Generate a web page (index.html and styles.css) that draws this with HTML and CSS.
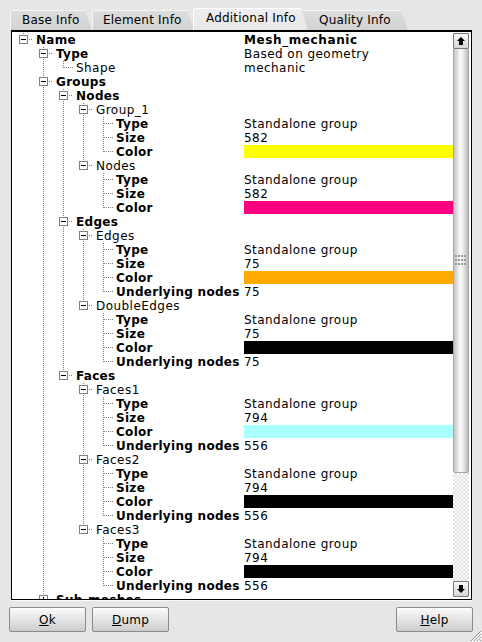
FILE: index.html
```html
<!DOCTYPE html>
<html lang="en">
<head>
    <meta charset="UTF-8">
    <meta name="viewport" content="width=device-width, initial-scale=1.0">
    <title>Mesh Information</title>
    <link rel="stylesheet" href="styles.css">
</head>
<body>
    <div class="tab-bar">
        <div class="tab tab-base">Base Info</div>
        <div class="tab tab-element">Element Info</div>
        <div class="tab tab-additional active">Additional Info</div>
        <div class="tab tab-quality">Quality Info</div>
    </div>

    <div class="tree-frame">
        <div class="tree" id="tree"></div>
        <div class="scrollbar">
            <div class="scroll-btn">
                <svg width="14" height="14" viewBox="0 0 14 14"><polygon points="7,3 11,7 9,7 9,11 5,11 5,7 3,7" fill="#000"/></svg>
            </div>
            <div class="scroll-thumb">
                <svg width="12" height="11" viewBox="0 0 12 11" fill="#9a9a9a">
                    <rect x="0" y="0" width="2" height="2"/><rect x="3" y="0" width="2" height="2"/><rect x="6" y="0" width="2" height="2"/><rect x="9" y="0" width="2" height="2"/>
                    <rect x="0" y="4" width="2" height="2"/><rect x="3" y="4" width="2" height="2"/><rect x="6" y="4" width="2" height="2"/><rect x="9" y="4" width="2" height="2"/>
                    <rect x="0" y="8" width="2" height="2"/><rect x="3" y="8" width="2" height="2"/><rect x="6" y="8" width="2" height="2"/><rect x="9" y="8" width="2" height="2"/>
                </svg>
            </div>
            <div class="scroll-track"></div>
            <div class="scroll-btn">
                <svg width="14" height="14" viewBox="0 0 14 14"><polygon points="7,11 11,7 9,7 9,3 5,3 5,7 3,7" fill="#000"/></svg>
            </div>
        </div>
    </div>

    <div class="buttons">
        <button class="btn"><u>O</u>k</button>
        <button class="btn"><u>D</u>ump</button>
        <button class="btn btn-help"><u>H</u>elp</button>
    </div>

    <svg class="size-grip" width="12" height="12" viewBox="0 0 12 12">
        <path d="M11 1 L1 11 M11 4 L4 11 M11 7 L7 11 M11 10 L10 11" stroke="#9a9a9a" stroke-width="1"/>
        <path d="M12 2 L2 12 M12 5 L5 12 M12 8 L8 12" stroke="#fff" stroke-width="1"/>
    </svg>

    <script>
        // helpers to build the groups
        function leaf(name, value, opts) {
            return Object.assign({ name: name, bold: true, value: value }, opts || {});
        }
        function group(name, size, color, under) {
            const kids = [leaf('Type', 'Standalone group'), leaf('Size', size), leaf('Color', '', { color: color })];
            if (under !== undefined) kids.push(leaf('Underlying nodes', under));
            return { name: name, children: kids };
        }

        const data = {
            name: 'Name', bold: true, value: 'Mesh_mechanic', valueBold: true,
            children: [
                { name: 'Type', bold: true, value: 'Based on geometry', children: [
                    { name: 'Shape', value: 'mechanic' }
                ]},
                { name: 'Groups', bold: true, children: [
                    { name: 'Nodes', bold: true, children: [
                        group('Group_1', '582', '#ffff00'),
                        group('Nodes', '582', '#ff0080')
                    ]},
                    { name: 'Edges', bold: true, children: [
                        group('Edges', '75', '#ffaa00', '75'),
                        group('DoubleEdges', '75', '#000000', '75')
                    ]},
                    { name: 'Faces', bold: true, children: [
                        group('Faces1', '794', '#aaffff', '556'),
                        group('Faces2', '794', '#000000', '556'),
                        group('Faces3', '794', '#000000', '556')
                    ]}
                ]},
                { name: 'Sub-meshes', bold: true, collapsed: true, children: [{ name: '' }] }
            ]
        };

        const tree = document.getElementById('tree');
        const dots = 'stroke="#808080" stroke-dasharray="1 1"';

        // Dessin d'une case de branche (20x14)
        function branchCell(kind, down) {
            let s = '<svg class="branch" width="20" height="14" viewBox="0 0 20 14" shape-rendering="crispEdges">';
            if (kind === 'line') {
                s += '<line x1="10.5" y1="0" x2="10.5" y2="14" ' + dots + '/>';
            } else if (kind === 'leaf') {
                s += '<line x1="10.5" y1="0" x2="10.5" y2="7" ' + dots + '/>';
                s += '<line x1="11" y1="6.5" x2="20" y2="6.5" ' + dots + '/>';
                if (down) s += '<line x1="10.5" y1="8" x2="10.5" y2="14" ' + dots + '/>';
            } else if (kind === 'open' || kind === 'closed') {
                s += '<line x1="10.5" y1="0" x2="10.5" y2="2" ' + dots + '/>';
                s += '<line x1="16" y1="6.5" x2="20" y2="6.5" ' + dots + '/>';
                if (down) s += '<line x1="10.5" y1="12" x2="10.5" y2="14" ' + dots + '/>';
                s += '<rect x="6.5" y="2.5" width="8" height="8" fill="#fff" stroke="#808080"/>';
                s += '<line x1="8" y1="6.5" x2="13" y2="6.5" stroke="#000"/>';
                if (kind === 'closed') s += '<line x1="10.5" y1="4" x2="10.5" y2="9" stroke="#000"/>';
            }
            return s + '</svg>';
        }

        function addRow(node, level, lines, hasNext) {
            const row = document.createElement('div');
            row.className = 'row';
            let html = '<div class="label-col">';
            for (let k = 0; k < level; k++) {
                html += branchCell(lines[k] ? 'line' : 'none');
            }
            let kind = 'leaf';
            if (node.children) kind = node.collapsed ? 'closed' : 'open';
            html += branchCell(kind, hasNext);
            html += '<span class="label' + (node.bold ? ' bold' : '') + '">' + node.name + '</span></div>';
            if (node.color) {
                html += '<div class="value-col"><div class="color-bar" style="background:' + node.color + '"></div></div>';
            } else {
                html += '<div class="value-col' + (node.valueBold ? ' bold' : '') + '">' + (node.value || '') + '</div>';
            }
            row.innerHTML = html;
            tree.appendChild(row);

            if (node.children && !node.collapsed) {
                const kids = node.children;
                for (let i = 0; i < kids.length; i++) {
                    addRow(kids[i], level + 1, lines.concat(hasNext), i < kids.length - 1);
                }
            }
        }

        addRow(data, 0, [], false);
    </script>
</body>
</html>
```

FILE: styles.css
```css
body {
    margin: 0;
    width: 482px;
    height: 642px;
    position: relative;
    overflow: hidden;
    background-color: #e6e6e6;
    font-family: "DejaVu Sans", "Noto Sans", sans-serif;
    font-size: 12px;
    color: #000;
}

/* Pestañas */
.tab-bar {
    display: flex;
    align-items: flex-end;
    height: 22px;
    padding: 8px 0 0 10px;
}

.tab {
    position: relative;
    height: 20px;
    line-height: 20px;
    box-sizing: border-box;
    white-space: nowrap;
    letter-spacing: 0.2px;
    background: linear-gradient(#f6f6f6 0 1px, #dcdcdc 1px, #d3d3d3);
    box-shadow: inset 1px 0 #f6f6f6;
    clip-path: polygon(0 2px, 2px 0, calc(100% - 7px) 0, 100% 100%, 0 100%);
}

.tab-base {
    width: 82px;
    padding-left: 12px;
}

.tab-element {
    width: 102px;
    padding-left: 11px;
}

.tab-additional {
    width: 115px;
    padding-left: 13px;
    margin-left: -1px;
}

.tab-quality {
    width: 107px;
    padding-left: 18px;
    margin-left: -7px;
}

.tab.active {
    height: 22px;
    line-height: 21px;
    z-index: 2;
    background: linear-gradient(#ffffff 0 1px, #eeeeee 1px, #e8e8e8);
    box-shadow: inset 1px 0 #ffffff;
}

/* Arbol */
.tree-frame {
    display: flex;
    margin-left: 11px;
    width: 461px;
    height: 570px;
    box-sizing: border-box;
    background-color: #fff;
    border: 1px solid #000;
    border-top-width: 2px;
    box-shadow: 0 1px #f8f8f8;
}

.tree {
    flex: 1;
    overflow: hidden;
    padding-top: 1px;
}

.row {
    display: flex;
    height: 14px;
    line-height: 14px;
    white-space: nowrap;
    letter-spacing: 0.45px;
}

.label-col {
    display: flex;
    width: 232px;
    padding-left: 1px;
    box-sizing: border-box;
    flex-shrink: 0;
}

.branch {
    display: block;
    flex-shrink: 0;
}

.label {
    padding-left: 3px;
}

.bold {
    font-weight: bold;
    letter-spacing: 0.3px;
}

.value-col {
    flex: 1;
    overflow: hidden;
}

.value-col.bold {
    letter-spacing: 0.6px;
}

.color-bar {
    height: 13px;
}

/* Barra de desplazamiento */
.scrollbar {
    display: flex;
    flex-direction: column;
    width: 16px;
    margin: 1px 2px 2px 0;
}

.scroll-btn {
    height: 16px;
    box-sizing: border-box;
    display: flex;
    justify-content: center;
    align-items: center;
    border: 1px solid #7a7a7a;
    border-radius: 1px;
    background: linear-gradient(#f8f8f8, #d6d6d6);
}

.scroll-thumb {
    height: 424px;
    box-sizing: border-box;
    display: flex;
    justify-content: center;
    align-items: center;
    border: 1px solid #a6a6a6;
    border-top: none;
    border-radius: 0 0 2px 2px;
    background: linear-gradient(to right, #c4c4c4, #e2e2e2 25%, #fbfbfb 45%, #ececec 65%, #d0d0d0 85%, #b6b6b6);
}

.scroll-track {
    flex: 1;
    background: repeating-conic-gradient(#e2e2e2 0 25%, #fbfbfb 0 50%) 0 0 / 4px 4px;
}

/* Botones */
.buttons {
    display: flex;
    gap: 6px;
    padding: 7px 9px 0 9px;
}

.btn {
    width: 77px;
    height: 25px;
    padding: 0;
    border: 1px solid #8a8a8a;
    border-radius: 2px;
    background: linear-gradient(#fbfbfb, #e4e4e4 50%, #cdcdcd);
    box-shadow: inset 0 1px #ffffff;
    font-family: "DejaVu Sans", sans-serif;
    font-size: 12px;
    letter-spacing: 0.2px;
    color: #000;
}

.btn-help {
    margin-left: auto;
}

.size-grip {
    position: absolute;
    right: 0;
    bottom: 0;
}
```
